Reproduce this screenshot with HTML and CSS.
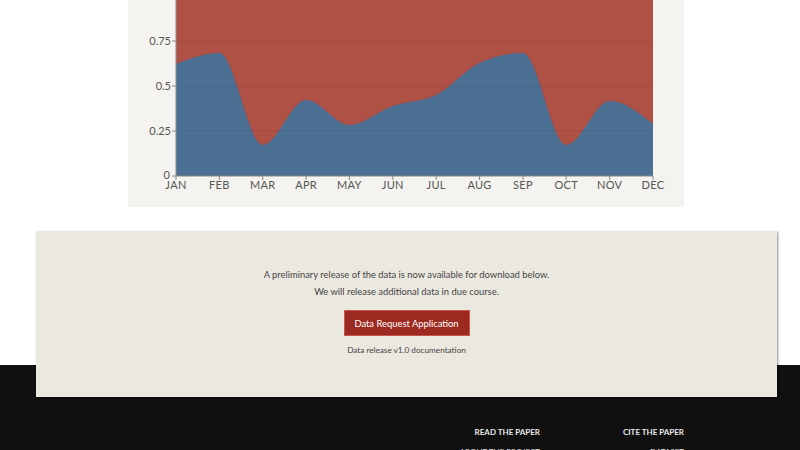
FILE: index.html
```html
<!DOCTYPE html>
<html lang="en">
<head>
<meta charset="utf-8">
<title>Data release</title>
<link rel="stylesheet" href="styles.css">
</head>
<body>
<main class="page">
  <section class="chart-card">
    <svg class="chart" width="556" height="207" viewBox="128 0 556 207" xmlns="http://www.w3.org/2000/svg">
      <rect x="176" y="-10" width="477" height="186" fill="#b05146"/>
      <path class="area-blue" d="M176,64 C190.45,58.5 204.91,53 219.36,53 C233.82,53 248.27,145 262.73,145 C277.18,145 291.64,100 306.09,100 C320.55,100 335,125 349.45,125 C363.91,125 378.36,111 392.82,106 C407.27,101 421.73,102.17 436.18,95 C450.64,87.83 465.09,69.67 479.55,63 C494,56.33 508.46,53 522.91,53 C537.36,53 551.82,145 566.27,145 C580.73,145 595.18,101 609.64,101 C624.09,101 638.55,112.5 653,124 L653,176 L176,176 Z" fill="#4b7094"/>
      <path class="curve" d="M176,64 C190.45,58.5 204.91,53 219.36,53 C233.82,53 248.27,145 262.73,145 C277.18,145 291.64,100 306.09,100 C320.55,100 335,125 349.45,125 C363.91,125 378.36,111 392.82,106 C407.27,101 421.73,102.17 436.18,95 C450.64,87.83 465.09,69.67 479.55,63 C494,56.33 508.46,53 522.91,53 C537.36,53 551.82,145 566.27,145 C580.73,145 595.18,101 609.64,101 C624.09,101 638.55,112.5 653,124" fill="none"/>
      <g class="grid">
        <line x1="176" y1="41" x2="653" y2="41"/>
        <line x1="176" y1="86" x2="653" y2="86"/>
        <line x1="176" y1="131" x2="653" y2="131"/>
      </g>
      <g class="axis">
        <line x1="176" y1="0" x2="176" y2="176"/>
        <line x1="176" y1="176" x2="653" y2="176"/>
        <line x1="172" y1="41" x2="176" y2="41"/>
        <line x1="172" y1="86" x2="176" y2="86"/>
        <line x1="172" y1="131" x2="176" y2="131"/>
        <line x1="172" y1="176" x2="176" y2="176"/>
        <line x1="176" y1="176" x2="176" y2="180"/>
        <line x1="219.36" y1="176" x2="219.36" y2="180"/>
        <line x1="262.73" y1="176" x2="262.73" y2="180"/>
        <line x1="306.09" y1="176" x2="306.09" y2="180"/>
        <line x1="349.45" y1="176" x2="349.45" y2="180"/>
        <line x1="392.82" y1="176" x2="392.82" y2="180"/>
        <line x1="436.18" y1="176" x2="436.18" y2="180"/>
        <line x1="479.55" y1="176" x2="479.55" y2="180"/>
        <line x1="522.91" y1="176" x2="522.91" y2="180"/>
        <line x1="566.27" y1="176" x2="566.27" y2="180"/>
        <line x1="609.64" y1="176" x2="609.64" y2="180"/>
        <line x1="653" y1="176" x2="653" y2="180"/>
      </g>
      <g class="ylabels">
        <text x="171" y="45">0.75</text>
        <text x="171" y="90">0.5</text>
        <text x="171" y="135">0.25</text>
        <text x="170" y="179">0</text>
      </g>
      <g class="xlabels">
        <text x="176" y="189">JAN</text>
        <text x="219.36" y="189">FEB</text>
        <text x="262.73" y="189">MAR</text>
        <text x="306.09" y="189">APR</text>
        <text x="349.45" y="189">MAY</text>
        <text x="392.82" y="189">JUN</text>
        <text x="436.18" y="189">JUL</text>
        <text x="479.55" y="189">AUG</text>
        <text x="522.91" y="189">SEP</text>
        <text x="566.27" y="189">OCT</text>
        <text x="609.64" y="189">NOV</text>
        <text x="653" y="189">DEC</text>
      </g>
    </svg>
  </section>

  <section class="release">
    <div class="release-box">
      <p class="release-text">A preliminary release of the data is now available for download below.<br>We will release additional data in due course.</p>
      <a class="btn" href="#">Data Request Application</a>
      <a class="doc-link" href="#">Data release v1.0 documentation</a>
    </div>
  </section>
</main>

<footer class="site-footer">
  <div class="footer-cols">
    <div class="footer-col">
      <h4>READ THE PAPER</h4>
      <a href="#">ABOUT THE PROJECT</a>
    </div>
    <div class="footer-col">
      <h4>CITE THE PAPER</h4>
      <a href="#">DATASET</a>
    </div>
  </div>
</footer>
</body>
</html>
```

FILE: styles.css
```css
* { box-sizing: border-box; }

html, body {
  margin: 0;
  padding: 0;
  background: #ffffff;
  font-family: "Nunito", Lato, "Open Sans", sans-serif;
  color: #444;
  overflow: hidden;
}

.page {
  display: flex;
  flex-direction: column;
}

.chart-card {
  margin-left: 128px;
  width: 556px;
  height: 207px;
  background: #f4f3ef;
}

.chart {
  display: block;
}

.curve {
  stroke: #6e5a6e;
  stroke-width: 1;
  stroke-opacity: 0.6;
}

.grid line {
  stroke: #000;
  stroke-opacity: 0.07;
  stroke-width: 1;
}

.axis line {
  stroke: #888;
  stroke-width: 1;
}

.ylabels text {
  font-family: Lato, sans-serif;
  font-size: 11px;
  fill: #555;
  text-anchor: end;
}

.xlabels text {
  font-family: Lato, sans-serif;
  font-size: 11px;
  fill: #555;
  text-anchor: middle;
  letter-spacing: 0.3px;
}

.release {
  padding: 24px 0 0 36px;
}

.release-box {
  position: relative;
  z-index: 1;
  width: 741px;
  height: 166px;
  margin-bottom: -32px;
  background: #ebe8e0;
  box-shadow: 1px 1px 2px rgba(0, 0, 0, 0.45);
  display: flex;
  flex-direction: column;
  align-items: center;
  padding-top: 35px;
}

.release-text {
  margin: 0;
  font-family: Lato, sans-serif;
  font-size: 9.4px;
  line-height: 17px;
  text-align: center;
  color: #454545;
}

.btn {
  margin-top: 10px;
  width: 126px;
  height: 26px;
  display: flex;
  align-items: center;
  justify-content: center;
  background: #9c2a21;
  border: 1px solid #c5564c;
  color: #fff;
  font-family: Lato, sans-serif;
  font-size: 9.4px;
  text-decoration: none;
}

.doc-link {
  margin-top: 9px;
  font-family: Lato, sans-serif;
  font-size: 8.2px;
  color: #444;
  text-decoration: none;
}

.site-footer {
  background: #111010;
  height: 120px;
  padding-top: 62px;
}

.footer-cols {
  display: flex;
  justify-content: flex-end;
  gap: 44px;
  padding-right: 116px;
}

.footer-col {
  width: 100px;
  display: flex;
  flex-direction: column;
  align-items: flex-end;
  gap: 10px;
}

.footer-col h4 {
  margin: 0;
  font-family: Lato, sans-serif;
  font-weight: 700;
  font-size: 8px;
  line-height: 10px;
  color: #e8e8e8;
}

.footer-col a {
  font-family: Lato, sans-serif;
  font-size: 8px;
  line-height: 10px;
  color: #ddd;
  text-decoration: none;
}
```
